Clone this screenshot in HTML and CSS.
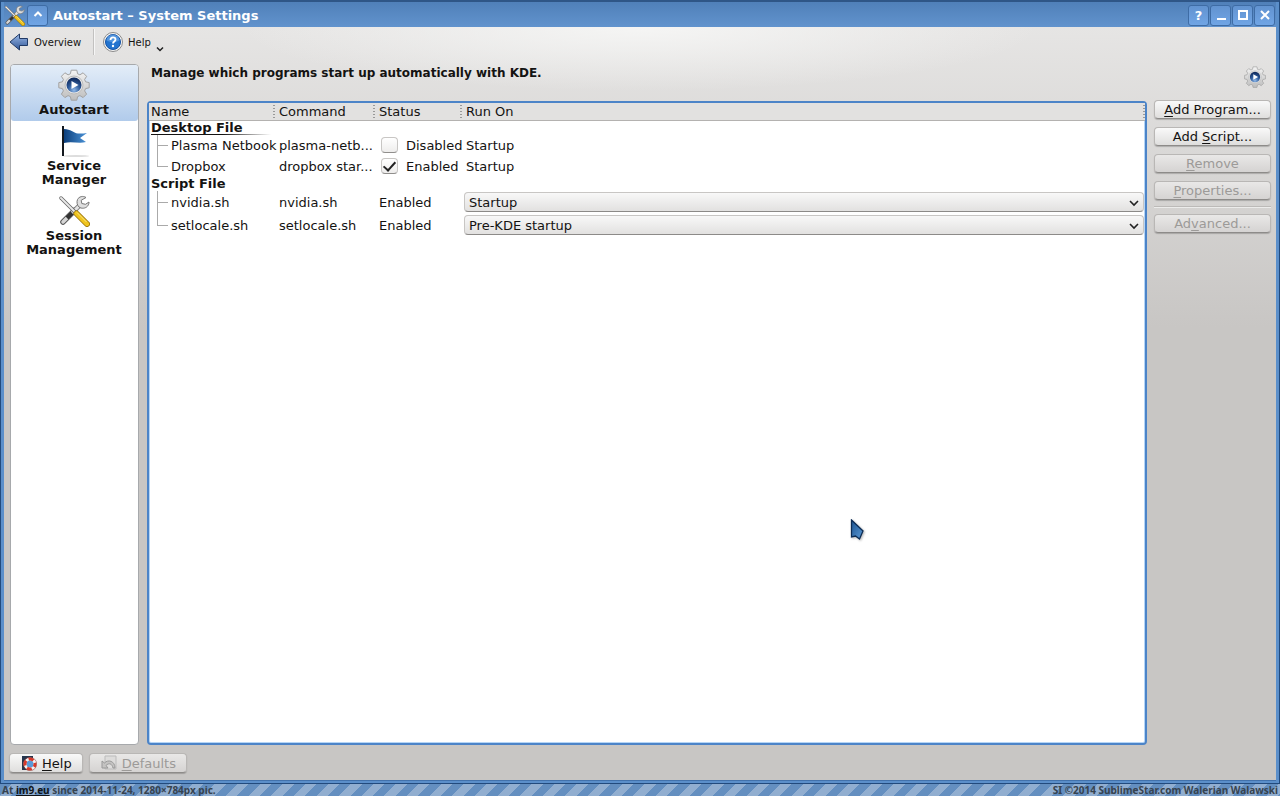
FILE: index.html
```html
<!DOCTYPE html>
<html lang="en">
<head>
    <meta charset="UTF-8">
    <meta name="viewport" content="width=device-width, initial-scale=1.0">
    <title>Autostart – System Settings</title>
    <link rel="stylesheet" href="styles.css">
</head>
<body>
    <!-- shared icons -->
    <svg class="defs" width="0" height="0" aria-hidden="true">
        <defs>
            <linearGradient id="metal" x1="0" y1="0" x2="0" y2="1">
                <stop offset="0" stop-color="#f4f4f4"/>
                <stop offset="1" stop-color="#bdbdbd"/>
            </linearGradient>
            <radialGradient id="ball" cx="0.5" cy="0.85" r="0.8">
                <stop offset="0" stop-color="#8fb8e8"/>
                <stop offset="0.5" stop-color="#2f5c9c"/>
                <stop offset="1" stop-color="#102a5c"/>
            </radialGradient>
            <linearGradient id="flag" x1="0" y1="0" x2="1" y2="0">
                <stop offset="0" stop-color="#0c3f7c"/>
                <stop offset="1" stop-color="#4c94d8"/>
            </linearGradient>
            <linearGradient id="arrow" x1="0" y1="0" x2="0" y2="1">
                <stop offset="0" stop-color="#9dbbe8"/>
                <stop offset="1" stop-color="#2f5596"/>
            </linearGradient>
            <linearGradient id="cursor" x1="0" y1="0" x2="1" y2="1">
                <stop offset="0" stop-color="#1c5390"/>
                <stop offset="1" stop-color="#5b9ad6"/>
            </linearGradient>
        </defs>
        <symbol id="gear" viewBox="0 0 32 32">
            <path d="M13.2 1.2h5.6l.8 3.6 2.3 1 3.2-2 3.5 3.5-2 3.2 1 2.3 3.6.8v5.2l-3.6.8-1 2.3 2 3.2-3.5 3.5-3.2-2-2.3 1-.8 3.6h-5.6l-.8-3.6-2.3-1-3.2 2-3.5-3.5 2-3.2-1-2.3-3.6-.8v-5.2l3.6-.8 1-2.3-2-3.2 3.5-3.5 3.2 2 2.3-1z" fill="url(#metal)" stroke="#a2a2a2" stroke-width="1"/>
            <circle cx="16" cy="16" r="9" fill="#e6e6e6" stroke="#bcbcbc"/>
            <circle cx="16" cy="16" r="7.5" fill="url(#ball)"/>
            <path d="M13.5 12l7 4-7 4z" fill="#fff"/>
        </symbol>
        <symbol id="tools" viewBox="0 0 32 32">
            <path d="M17 15L5 27" stroke="#555" stroke-width="5.5" stroke-linecap="round"/>
            <path d="M17 15L5 27" stroke="#d6d6d6" stroke-width="3.5" stroke-linecap="round"/>
            <path d="M14 18l-5 5" stroke="#333" stroke-width="4"/>
            <path d="M17 15l5-5" stroke="#888" stroke-width="5"/>
            <path d="M17 15l5-5" stroke="#e4e4e4" stroke-width="3"/>
            <path d="M28 2.5c-3-2-7-1-8.5 2-1 2.5-.5 5.5 1.5 7.5 2.5 2 6.5 1.5 8.5-.8 1-1.200 1.600-2.700 1.500-4.200l-3.500 2.300-3.700-.8-.6-3.200z" fill="#dedede" stroke="#777"/>
            <path d="M3 3l14 14" stroke="#666" stroke-width="3.5" stroke-linecap="round"/>
            <path d="M3 3l14 14" stroke="#e9e9e9" stroke-width="2" stroke-linecap="round"/>
            <path d="M18.5 18.5L29 29" stroke="#94700a" stroke-width="6" stroke-linecap="round"/>
            <path d="M18.5 18.5L29 29" stroke="#f0c41e" stroke-width="4.5" stroke-linecap="round"/>
            <path d="M19 17.5l9.5 9.5" stroke="#fbe783" stroke-width="1"/>
        </symbol>
    </svg>

    <div class="window">
        <header class="titlebar">
            <svg class="title-icon" viewBox="0 0 32 32"><use href="#tools"/></svg>
            <button class="title-btn" aria-label="Shade">
                <svg viewBox="0 0 12 12"><path d="M2.5 7L6 3.5 9.5 7"/></svg>
            </button>
            <h1 class="title-text">Autostart – System Settings</h1>
            <div class="title-buttons">
                <button class="title-btn" aria-label="What's this"><span>?</span></button>
                <button class="title-btn" aria-label="Minimize">
                    <svg viewBox="0 0 12 12"><path d="M2 10h9"/></svg>
                </button>
                <button class="title-btn" aria-label="Maximize">
                    <svg viewBox="0 0 12 12"><rect x="2" y="2" width="8" height="8"/></svg>
                </button>
                <button class="title-btn" aria-label="Close">
                    <svg viewBox="0 0 12 12"><path d="M2 2l8 8M10 2l-8 8"/></svg>
                </button>
            </div>
        </header>

        <div class="content">
            <nav class="toolbar">
                <button class="tool-btn">
                    <svg class="icon-arrow" viewBox="0 0 20 18"><path d="M1 9l9.5-8v4.5h8v7h-8V17z" fill="url(#arrow)" stroke="#213a66"/></svg>
                    Overview
                </button>
                <span class="tool-sep"></span>
                <button class="tool-btn">
                    <svg class="icon-help" viewBox="0 0 20 20">
                        <circle cx="10" cy="10" r="9.5" fill="#f5f5f5" stroke="#8a8a8a"/>
                        <circle cx="10" cy="10" r="7.5" fill="#2273cf" stroke="#1553a5"/>
                        <path d="M3.5 8.5a6.5 6 0 0 1 13 0q-6 3-13 0z" fill="#70aae8" opacity=".6"/>
                        <path d="M7.5 8c0-3.5 5-3.5 5-.5 0 2-2.5 2-2.5 4" fill="none" stroke="#fff" stroke-width="1.8"/>
                        <circle cx="10" cy="14" r="1.2" fill="#fff"/>
                    </svg>
                    Help
                    <svg class="icon-drop" viewBox="0 0 8 6"><path d="M1 1.5l3 3 3-3"/></svg>
                </button>
            </nav>

            <div class="main">
                <aside class="sidebar">
                    <a class="side-item active" href="#">
                        <svg viewBox="0 0 32 32"><use href="#gear"/></svg>
                        Autostart
                    </a>
                    <a class="side-item" href="#">
                        <svg viewBox="0 0 32 32">
                            <ellipse cx="18" cy="31" rx="13" ry="1" fill="#ddd"/>
                            <path d="M6 4c7 0 9 4 14 4.500 3 .3 6-.2 9-.5l-7 5 6 4c-7 2-14-1-22 1z" fill="url(#flag)"/>
                            <path d="M5 1v30" stroke="#14191f" stroke-width="2"/>
                        </svg>
                        Service Manager
                    </a>
                    <a class="side-item" href="#">
                        <svg viewBox="0 0 32 32"><use href="#tools"/></svg>
                        Session Management
                    </a>
                </aside>

                <section class="module">
                    <div class="module-head">
                        <h2>Manage which programs start up automatically with KDE.</h2>
                        <svg viewBox="0 0 32 32"><use href="#gear"/></svg>
                    </div>
                    <div class="module-body">
                        <div class="list">
                            <table>
                                <colgroup>
                                    <col class="col-name">
                                    <col class="col-command">
                                    <col class="col-status">
                                    <col>
                                </colgroup>
                                <thead>
                                    <tr><th>Name</th><th>Command</th><th>Status</th><th>Run On</th></tr>
                                </thead>
                                <tbody>
                                    <tr class="group current"><td colspan="4"><span>Desktop File</span></td></tr>
                                    <tr class="item">
                                        <td class="branch">Plasma Netbook</td>
                                        <td>plasma-netb...</td>
                                        <td><label><input type="checkbox">Disabled</label></td>
                                        <td>Startup</td>
                                    </tr>
                                    <tr class="item">
                                        <td class="branch last">Dropbox</td>
                                        <td>dropbox star...</td>
                                        <td><label><input type="checkbox" checked>Enabled</label></td>
                                        <td>Startup</td>
                                    </tr>
                                    <tr class="group"><td colspan="4"><span>Script File</span></td></tr>
                                    <tr class="item script">
                                        <td class="branch">nvidia.sh</td>
                                        <td>nvidia.sh</td>
                                        <td>Enabled</td>
                                        <td class="combo">
                                            <select aria-label="Run nvidia.sh on"><option>Startup</option><option>Shutdown</option><option>Pre-KDE startup</option></select>
                                            <svg viewBox="0 0 10 8"><path d="M1 2l4 4 4-4"/></svg>
                                        </td>
                                    </tr>
                                    <tr class="item script">
                                        <td class="branch last">setlocale.sh</td>
                                        <td>setlocale.sh</td>
                                        <td>Enabled</td>
                                        <td class="combo">
                                            <select aria-label="Run setlocale.sh on"><option>Startup</option><option>Shutdown</option><option selected>Pre-KDE startup</option></select>
                                            <svg viewBox="0 0 10 8"><path d="M1 2l4 4 4-4"/></svg>
                                        </td>
                                    </tr>
                                </tbody>
                            </table>
                        </div>
                        <div class="actions">
                            <button class="btn"><span><u>A</u>dd Program...</span></button>
                            <button class="btn"><span>Add <u>S</u>cript...</span></button>
                            <button class="btn" disabled><span><u>R</u>emove</span></button>
                            <button class="btn" disabled><span><u>P</u>roperties...</span></button>
                            <hr>
                            <button class="btn" disabled><span>Ad<u>v</u>anced...</span></button>
                        </div>
                    </div>
                </section>
            </div>

            <div class="bottom">
                <button class="btn">
                    <svg viewBox="0 0 16 16">
                        <path d="M1 1h11v14H1z" fill="#26354d"/>
                        <circle cx="9" cy="9" r="5" fill="#5a9ad8" stroke="#f2f2f2" stroke-width="3"/>
                        <circle cx="9" cy="9" r="5" fill="none" stroke="#d8392b" stroke-width="3" stroke-dasharray="5 2.85" stroke-dashoffset="2"/>
                        <circle cx="9" cy="9" r="6.7" fill="none" stroke="#93372f" stroke-width=".5"/>
                    </svg>
                    <span><u>H</u>elp</span>
                </button>
                <button class="btn" disabled>
                    <svg viewBox="0 0 16 16">
                        <path d="M4 1h11v13H4z" fill="#dddcdb" stroke="#bbb"/>
                        <path d="M1 6v7h6l-2-2.5c3-3 6-2 7 2.5h2C14 6 7 4 3.5 8z" fill="#c4c3c2" stroke="#999"/>
                    </svg>
                    <span><u>D</u>efaults</span>
                </button>
            </div>
        </div>
    </div>

    <footer class="credits">
        <span>At <a href="#">im9.eu</a> since 2014-11-24, 1280×784px pic.</span>
        <span>SI ©2014 SublimeStar.com Walerian Walawski</span>
    </footer>

    <!-- mouse pointer -->
    <svg class="pointer" viewBox="0 0 14 22"><path d="M1.5 1l11.5 11-3.500 8-4-3-4 1z" fill="url(#cursor)" stroke="#0c2c54" stroke-width="1.3"/></svg>
</body>
</html>
```
FILE: styles.css
```css
* {
    box-sizing: border-box;
}

body {
    margin: 0;
    min-height: 100vh;
    display: flex;
    flex-direction: column;
    font-family: "DejaVu Sans", sans-serif;
    font-size: 13px;
    line-height: 15px;
    color: #141312;
}

button,
select {
    font: inherit;
    color: inherit;
}

.defs {
    position: absolute;
}

.window {
    flex: 1;
    display: flex;
    flex-direction: column;
    padding: 0 3px 2px;
    background: #5b8fca;
    border: 1px solid #224a7c;
    border-top: 2px solid #2f5687;
}

/* title bar */
.titlebar {
    display: flex;
    align-items: center;
    height: 25px;
    padding: 1px 1px 0 0;
    background: linear-gradient(#5080b9, #6193cd);
}

.title-icon {
    width: 21px;
    height: 21px;
    margin-right: 2px;
}

.title-btn {
    display: flex;
    align-items: center;
    justify-content: center;
    width: 21px;
    height: 21px;
    padding: 0;
    border: 1px solid #3e6ca5;
    border-radius: 3px;
    background: linear-gradient(#6293d0, #70a5e5);
    color: #fff;
    font-size: 13px;
    font-weight: bold;
}

.title-btn svg {
    width: 12px;
    height: 12px;
    fill: none;
    stroke: #fff;
    stroke-width: 2;
}

.title-text {
    margin: 0 0 0 5px;
    font-size: 13px;
    font-weight: bold;
    color: #fff;
}

.title-buttons {
    display: flex;
    gap: 1px;
    margin-left: auto;
}

/* window content */
.content {
    flex: 1;
    display: flex;
    flex-direction: column;
    padding: 0 5px 7px 6px;
    border-bottom: 1px solid #4272ac;
    background:
        radial-gradient(ellipse 400px 64px at 50% 0, #f5f5f4, transparent),
        linear-gradient(#e6e5e4, #c8c6c4 300px);
}

.toolbar {
    display: flex;
    align-items: center;
    height: 30px;
    margin-left: -1px;
}

.tool-btn {
    display: flex;
    align-items: center;
    gap: 5px;
    padding: 0;
    border: none;
    background: none;
    font-size: 10px;
}

.icon-arrow {
    width: 20px;
    height: 18px;
}

.icon-help {
    width: 20px;
    height: 20px;
}

.icon-drop {
    width: 8px;
    height: 6px;
    margin-top: 14px;
    fill: none;
    stroke: #222;
    stroke-width: 1.5;
}

.tool-sep {
    width: 2px;
    height: 26px;
    margin: 0 8px 0 12px;
    border-left: 1px solid #c2c1c0;
    border-right: 1px solid #f6f6f6;
}

.main {
    flex: 1;
    display: flex;
    gap: 8px;
    padding-top: 7px;
}

/* category list */
.sidebar {
    width: 129px;
    border: 1px solid #a7a9ac;
    border-radius: 4px;
    background: #fff;
}

.side-item {
    display: flex;
    flex-direction: column;
    align-items: center;
    padding: 4px 12px 4px 11px;
    font-weight: bold;
    line-height: 14px;
    text-align: center;
    text-decoration: none;
    color: #141312;
}

.side-item svg {
    width: 32px;
    height: 32px;
    margin-bottom: 2px;
}

.side-item.active {
    border-radius: 3px;
    background: linear-gradient(#e3edf8, #b1cbeb);
}

/* module */
.module {
    flex: 1;
    display: flex;
    flex-direction: column;
}

.module-head {
    display: flex;
    align-items: flex-start;
    justify-content: space-between;
    height: 37px;
    padding: 2px 5px 0 4px;
}

.module-head h2 {
    margin: 0;
    font-size: 12px;
    font-weight: bold;
}

.module-head svg {
    width: 22px;
    height: 22px;
}

.module-body {
    flex: 1;
    display: flex;
    gap: 7px;
}

.list {
    flex: 1;
    border: 2px solid #4c84c8;
    border-radius: 4px;
    background: #fff;
    box-shadow: inset 0 0 0 1px #b5d5f6;
}

table {
    width: 100%;
    table-layout: fixed;
    border-collapse: collapse;
}

.col-name {
    width: 128px;
}

.col-command {
    width: 100px;
}

.col-status {
    width: 87px;
}

th,
td {
    padding: 0 0 0 2px;
    text-align: left;
    font-weight: normal;
    white-space: nowrap;
}

th {
    height: 17px;
    border-bottom: 1px solid #b4b2b0;
    background:
        linear-gradient(#999 1px, transparent 1px) right 2px top 5px / 2px 3px repeat-y,
        #e2e1e0;
}

th:last-child {
    background-position: right 0 top 5px, 0 0;
}

.group td {
    height: 14px;
    font-weight: bold;
    line-height: 14px;
}

.group span {
    display: block;
    width: 120px;
}

.current span {
    background: linear-gradient(90deg, #141312 60%, transparent) left bottom / 100% 1px no-repeat;
}

.item td {
    height: 21px;
}

.item.script td {
    height: 23px;
}

/* tree lines */
.item .branch {
    padding-left: 22px;
    background:
        linear-gradient(#aaa, #aaa) 8px 0 / 1px 100% no-repeat,
        linear-gradient(#aaa, #aaa) 8px 50% / 11px 1px no-repeat;
}

.item .branch.last {
    background-size: 1px 50%, 11px 1px;
}

label {
    display: flex;
    align-items: center;
    gap: 8px;
}

input[type="checkbox"] {
    appearance: none;
    width: 17px;
    height: 16px;
    margin: 0 0 0 2px;
    border: 1px solid #c8c6c4;
    border-bottom-color: #908e8c;
    border-radius: 4px;
    background: linear-gradient(#fff, #eeedec);
}

input[type="checkbox"]:checked::after {
    content: "";
    display: block;
    width: 5px;
    height: 10px;
    margin: 0 auto;
    border: solid #222;
    border-width: 0 2px 2px 0;
    transform: rotate(42deg);
}

.combo {
    position: relative;
}

.combo select {
    display: block;
    appearance: none;
    width: calc(100% + 1px);
    height: 20px;
    margin-left: -2px;
    padding: 0 4px;
    border: 1px solid #c8c6c4;
    border-bottom-color: #8c8a88;
    border-radius: 4px;
    background: linear-gradient(#f8f8f8, #e2e1e0);
}

.combo svg {
    position: absolute;
    top: 8px;
    right: 6px;
    width: 10px;
    height: 8px;
    fill: none;
    stroke: #222;
    stroke-width: 1.6;
    pointer-events: none;
}

/* buttons */
.btn {
    display: flex;
    align-items: center;
    justify-content: center;
    gap: 5px;
    height: 19px;
    padding: 0 11px;
    border: 1px solid #b9b7b5;
    border-bottom-color: #8d8b89;
    border-radius: 4px;
    background: linear-gradient(#f9f9f9, #dfdedd);
    box-shadow: 0 1px 1px rgba(0, 0, 0, 0.2);
}

.btn:disabled {
    color: #9c9a98;
    background: linear-gradient(#e9e8e7, #d5d3d2);
}

.btn u {
    text-underline-offset: 2px;
}

.btn svg {
    width: 16px;
    height: 16px;
}

.actions {
    display: flex;
    flex-direction: column;
    gap: 8px;
    width: 117px;
    margin-top: -1px;
}

.actions .btn {
    padding: 0;
}

.actions hr {
    width: 100%;
    height: 2px;
    margin: -2px 0;
    border: none;
    border-top: 1px solid #bcbab8;
    border-bottom: 1px solid #ececeb;
}

.bottom {
    display: flex;
    gap: 6px;
    margin-left: -1px;
    padding-top: 8px;
}

.bottom .btn {
    height: 20px;
    padding: 0 10px 0 11px;
}

/* striped strip below the window */
.credits {
    display: flex;
    justify-content: space-between;
    height: 12px;
    padding: 0 2px;
    font-family: "Noto Sans", sans-serif;
    font-size: 10px;
    font-weight: bold;
    line-height: 12px;
    color: #37434f;
    background: repeating-linear-gradient(135deg, #648fc0 0 8px, #91aed0 8px 16px);
}

.credits a {
    color: #101418;
}

.pointer {
    position: absolute;
    left: 850px;
    top: 519px;
    width: 14px;
    height: 22px;
    filter: drop-shadow(1px 1px 1px rgba(0, 0, 0, 0.3));
}
```
